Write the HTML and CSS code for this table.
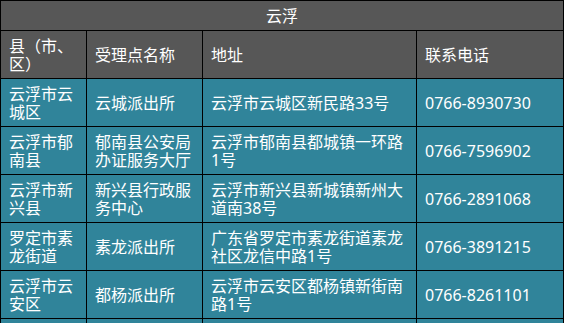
FILE: index.html
```html
<!DOCTYPE html>
<html lang="zh-CN">
<head>
<meta charset="utf-8">
<title>云浮</title>
<link rel="stylesheet" href="styles.css">
</head>
<body>
<div class="table">
  <div class="cell title">云浮</div>
  <div class="cell head">县（市、区）</div>
  <div class="cell head">受理点名称</div>
  <div class="cell head">地址</div>
  <div class="cell head">联系电话</div>

  <div class="cell">云浮市云城区</div>
  <div class="cell">云城派出所</div>
  <div class="cell">云浮市云城区新民路33号</div>
  <div class="cell">0766-8930730</div>

  <div class="cell">云浮市郁南县</div>
  <div class="cell">郁南县公安局办证服务大厅</div>
  <div class="cell">云浮市郁南县都城镇一环路1号</div>
  <div class="cell">0766-7596902</div>

  <div class="cell">云浮市新兴县</div>
  <div class="cell">新兴县行政服务中心</div>
  <div class="cell">云浮市新兴县新城镇新州大道南38号</div>
  <div class="cell">0766-2891068</div>

  <div class="cell">罗定市素龙街道</div>
  <div class="cell">素龙派出所</div>
  <div class="cell">广东省罗定市素龙街道素龙社区龙信中路1号</div>
  <div class="cell">0766-3891215</div>

  <div class="cell">云浮市云安区</div>
  <div class="cell">都杨派出所</div>
  <div class="cell">云浮市云安区都杨镇新街南路1号</div>
  <div class="cell">0766-8261101</div>

  <div class="cell"></div>
  <div class="cell"></div>
  <div class="cell"></div>
  <div class="cell"></div>
</div>
</body>
</html>
```

FILE: styles.css
```css
html, body {
  margin: 0;
  padding: 0;
  background: #ffffff;
}

body {
  font-family: "Noto Sans", "Noto Sans CJK SC", sans-serif;
  font-size: 16px;
  color: #ffffff;
}

.table {
  display: grid;
  grid-template-columns: 85px 115px 213px 146px;
  grid-template-rows: 29px;
  grid-auto-rows: 47px;
  gap: 1px;
  padding: 1px;
  background: #000000;
  width: max-content;
}

.cell {
  display: flex;
  align-items: center;
  padding: 0 8px;
  line-height: 18px;
  background: #30849a;
  overflow: hidden;
}

.title,
.head {
  background: #575757;
}

.title {
  grid-column: 1 / -1;
  justify-content: center;
}
```
